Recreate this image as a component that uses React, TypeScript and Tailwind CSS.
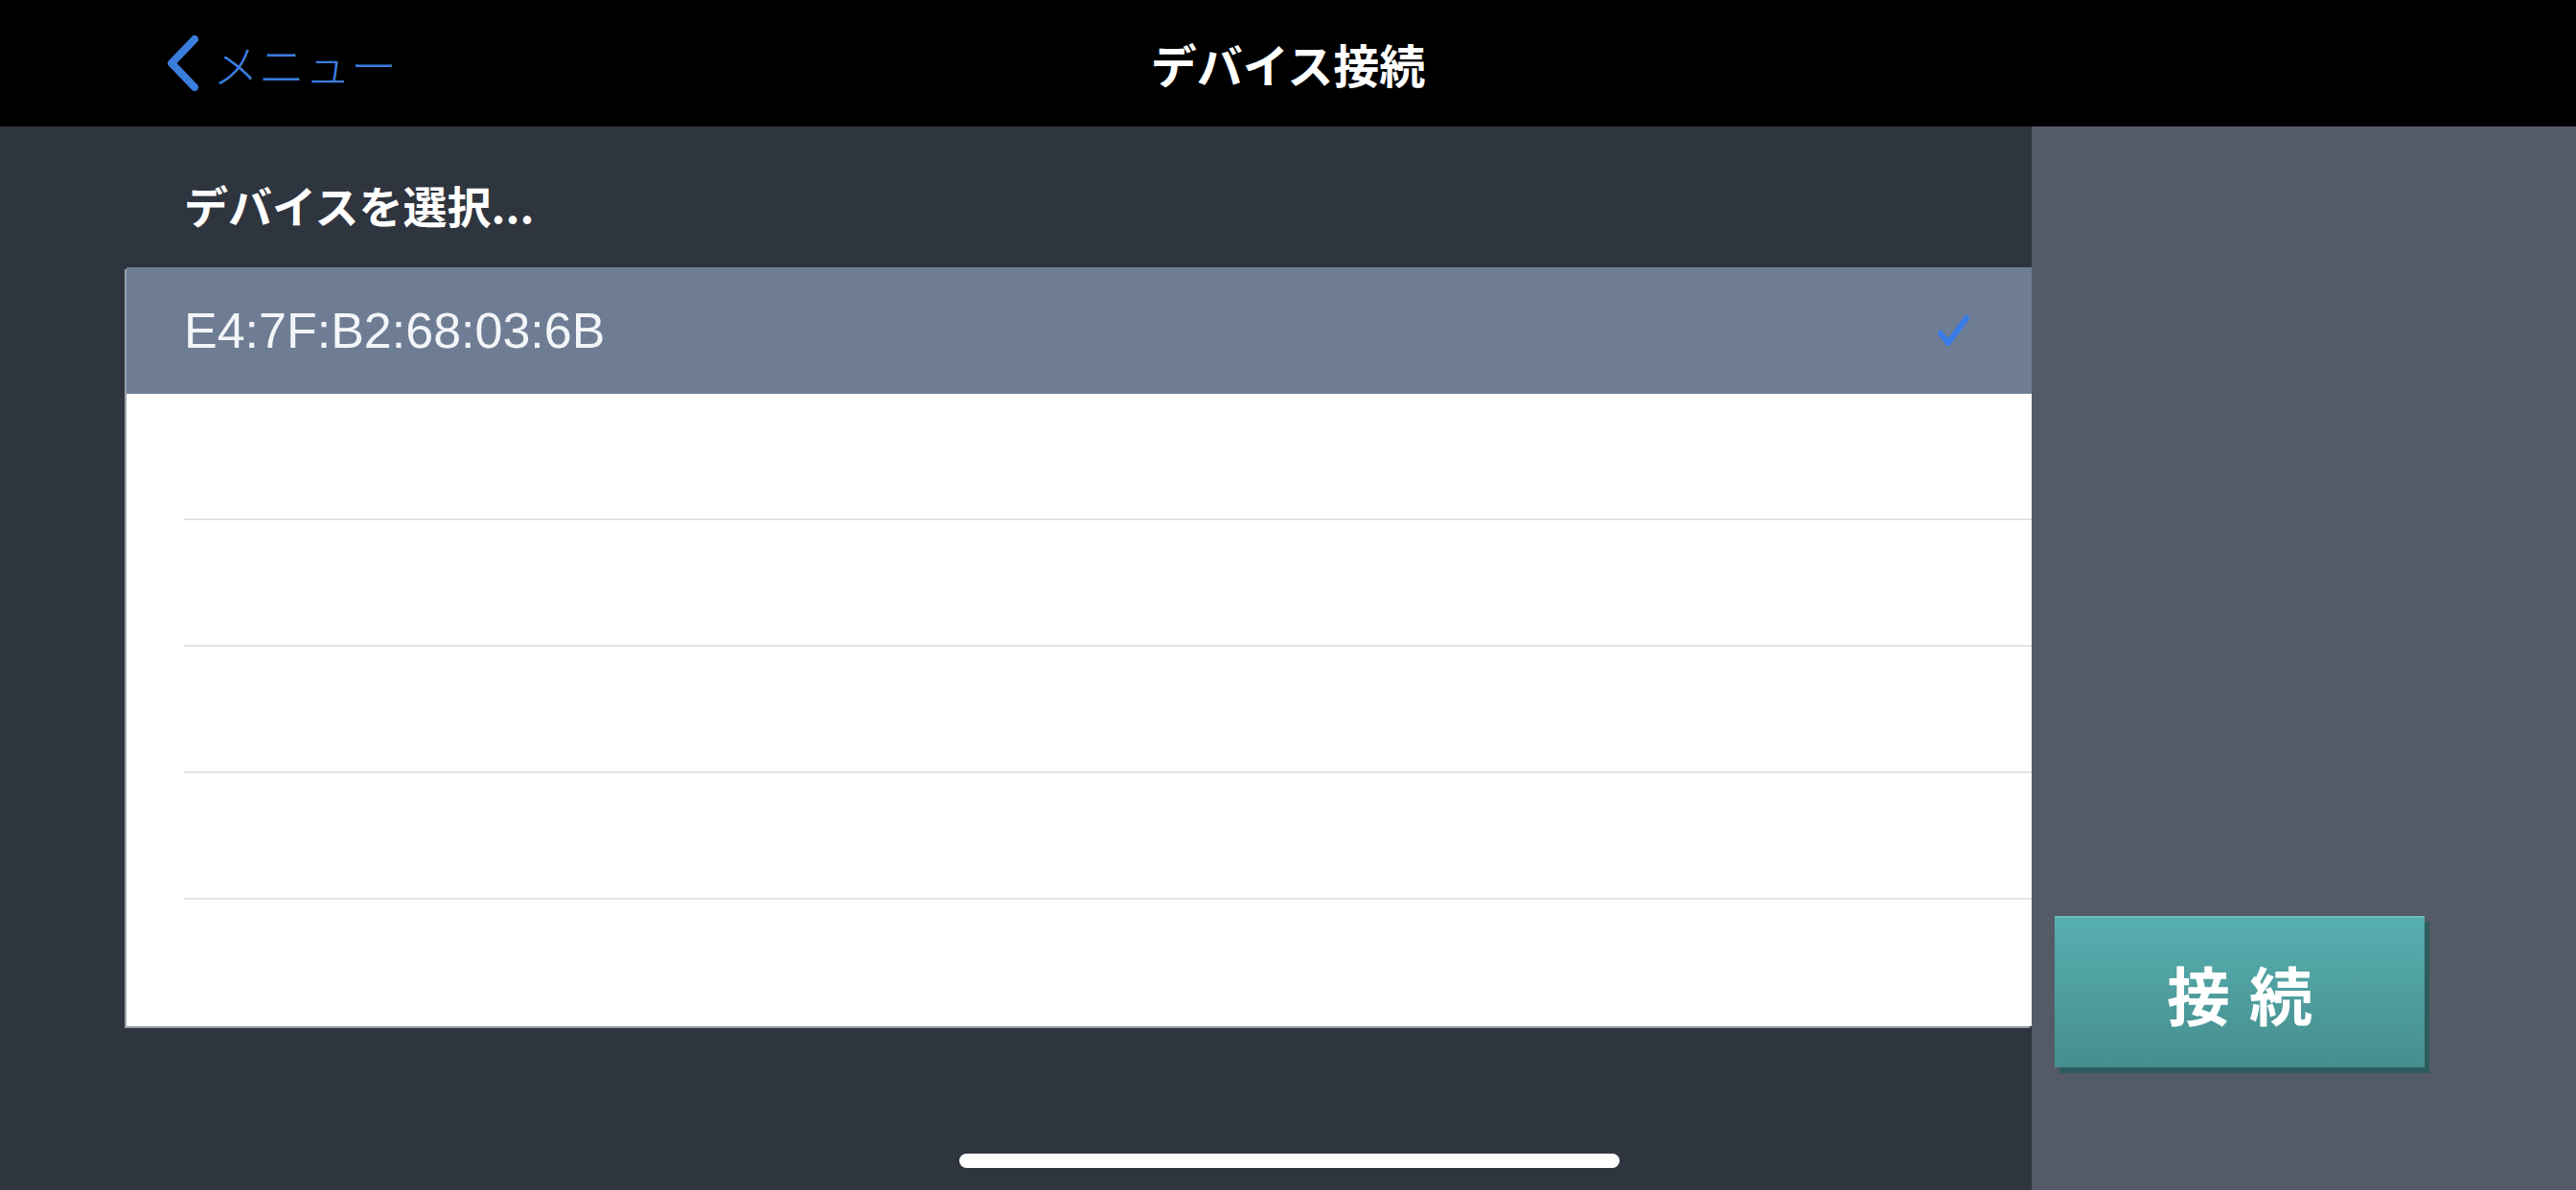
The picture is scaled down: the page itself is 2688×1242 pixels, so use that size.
import React from "react";

const jp = "font-['Noto_Sans_CJK_JP',sans-serif]";

const devices = ["E4:7F:B2:68:03:6B", "", "", "", "", ""];

const BackChevron = () => (
  <svg width="40" height="62" viewBox="0 0 40 62" fill="none">
    <path d="M33 6 L9 31 L33 56" stroke="#3b7ddd" strokeWidth="8" strokeLinecap="round" strokeLinejoin="round" />
  </svg>
);

const Check = () => (
  <svg width="40" height="40" viewBox="0 0 40 40" fill="none">
    <path d="M7 23 L15 33 L34 7" stroke="#3a7be8" strokeWidth="6" strokeLinecap="round" strokeLinejoin="round" />
  </svg>
);

export default function App() {
  return (
    <div className="relative w-[2688px] h-[1242px] overflow-hidden flex flex-col bg-[#2f353e]">
      {/* Nav bar */}
      <div className="relative h-[132px] bg-black flex items-center justify-center shrink-0">
        <div className="absolute left-[170px] top-0 h-full flex items-center gap-[12px]">
          <BackChevron />
          <span className={`${jp} text-[48px] font-light text-[#3b7ddd] leading-none`}>メニュー</span>
        </div>
        <h1 className={`${jp} text-[48px] font-semibold text-white leading-none`}>デバイス接続</h1>
      </div>

      <div className="flex flex-1">
        {/* Left: device list */}
        <div className="flex-1 flex flex-col bg-[#2f353e]">
          <div className="h-[147px] flex items-center pl-[192px] pt-[14px]">
            <span className={`${jp} text-[46px] font-bold text-white leading-none`}>デバイスを選択...</span>
          </div>
          <div className="ml-[132px] bg-white shadow-[-2px_2px_0_#9aa0a8]">
            {devices.map((d, i) =>
              i === 0 ? (
                <div key={i} className="h-[132px] bg-[#6e7d94] flex items-center pl-[60px] pr-[62px]">
                  <span className="flex-1 font-['Liberation_Sans',Arial,sans-serif] text-[52px] text-[#f3f5f8] leading-none">{d}</span>
                  <Check />
                </div>
              ) : (
                <div key={i} className="h-[132px] pl-[60px]">
                  <div className={`h-full ${i < devices.length - 1 ? "border-b-2 border-[#e4e4e7]" : ""}`} />
                </div>
              )
            )}
          </div>
        </div>

        {/* Right: action panel */}
        <div className="w-[568px] bg-[#555b66] pt-[824px] pl-[24px]">
          <button className="w-[386px] h-[158px] bg-gradient-to-b from-[#58afb0] to-[#468e8e] border-t-2 border-[#6cc0c0] shadow-[5px_6px_0_#2c5c5e] flex items-center justify-center">
            <span className={`${jp} text-[66px] font-bold text-white tracking-[20px] pl-[20px] leading-none`}>接続</span>
          </button>
        </div>
      </div>

      {/* Home indicator */}
      <div className="absolute left-[1001px] bottom-[23px] w-[689px] h-[15px] rounded-full bg-white" />
    </div>
  );
}
